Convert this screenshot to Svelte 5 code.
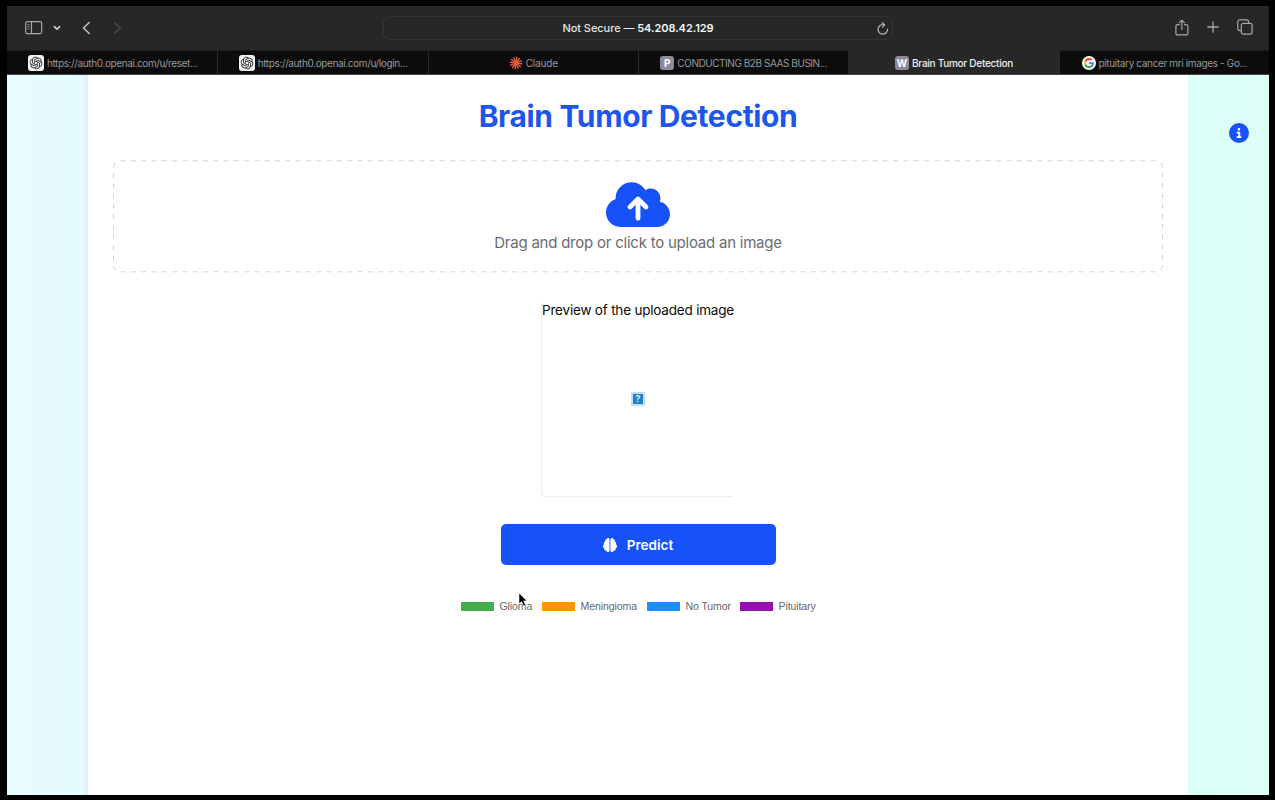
<script>
  const openai = 'M22.2819 9.8211a5.9847 5.9847 0 0 0-.5157-4.9108 6.0462 6.0462 0 0 0-6.5098-2.9A6.0651 6.0651 0 0 0 4.9807 4.1818a5.9847 5.9847 0 0 0-3.9977 2.9 6.0462 6.0462 0 0 0 .7427 7.0966 5.98 5.98 0 0 0 .511 4.9107 6.051 6.051 0 0 0 6.5146 2.9001A5.9847 5.9847 0 0 0 13.2599 24a6.0557 6.0557 0 0 0 5.7718-4.2058 5.9894 5.9894 0 0 0 3.9977-2.9001 6.0557 6.0557 0 0 0-.7475-7.0729zm-9.022 12.6081a4.4755 4.4755 0 0 1-2.8764-1.0408l.1419-.0804 4.7783-2.7582a.7948.7948 0 0 0 .3927-.6813v-6.7369l2.02 1.1686a.071.071 0 0 1 .038.052v5.5826a4.504 4.504 0 0 1-4.4945 4.4944zm-9.6607-4.1254a4.4708 4.4708 0 0 1-.5346-3.0137l.142.0852 4.783 2.7582a.7712.7712 0 0 0 .7806 0l5.8428-3.3685v2.3324a.0804.0804 0 0 1-.0332.0615L9.74 19.9502a4.4992 4.4992 0 0 1-6.1408-1.6464zM2.3408 7.8956a4.485 4.485 0 0 1 2.3655-1.9728V11.6a.7664.7664 0 0 0 .3879.6765l5.8144 3.3543-2.0201 1.1685a.0757.0757 0 0 1-.071 0l-4.8303-2.7865A4.504 4.504 0 0 1 2.3408 7.872zm16.5963 3.8558L13.1038 8.364 15.1192 7.2a.0757.0757 0 0 1 .071 0l4.8303 2.7913a4.4944 4.4944 0 0 1-.6765 8.1042v-5.6772a.79.79 0 0 0-.407-.667zm2.0107-3.0231l-.142-.0852-4.7735-2.7818a.7759.7759 0 0 0-.7854 0L9.409 9.2297V6.8974a.0662.0662 0 0 1 .0284-.0615l4.8303-2.7866a4.4992 4.4992 0 0 1 6.6802 4.66zM8.3065 12.863l-2.02-1.1638a.0804.0804 0 0 1-.038-.0567V6.0742a4.4992 4.4992 0 0 1 7.3757-3.4537l-.142.0805L8.704 5.459a.7948.7948 0 0 0-.3927.6813zm1.0976-2.3654l2.602-1.4998 2.6069 1.4998v2.9994l-2.5974 1.4997-2.6067-1.4997Z';

  const tabs = [
    { icon: 'openai', label: 'https://auth0.openai.com/u/reset...', spacing: -0.38 },
    { icon: 'openai', label: 'https://auth0.openai.com/u/login...', spacing: -0.38 },
    { icon: 'claude', label: 'Claude', spacing: -0.15 },
    { icon: 'P', label: 'CONDUCTING B2B SAAS BUSIN...', spacing: -0.45 },
    { icon: 'W', label: 'Brain Tumor Detection', spacing: -0.27, active: true },
    { icon: 'google', label: 'pituitary cancer mri images - Go...', spacing: -0.36 }
  ];
  const rays = Array.from({ length: 12 }, (_, i) => i * 30 + 8);
  const legend = [
    { label: 'Glioma', color: '#43ad4b', width: 81 },
    { label: 'Meningioma', color: '#ff9500', width: 105 },
    { label: 'No Tumor', color: '#1a8fff', width: 93 },
    { label: 'Pituitary', color: '#9610ad', width: 77 }
  ];
</script>

<div class="screen">
  <div class="window">
    <header class="toolbar">
      <div class="left">
        <svg width="18" height="14" viewBox="0 0 18 14" fill="none" stroke="#a5a7a6" stroke-width="1.2"><rect x=".7" y=".7" width="16" height="12" rx="1.8" /><path d="M6.5 1v11.5" /><path d="M2.5 3.5h2M2.5 5.7h2M2.5 7.9h2" stroke-width=".8" /></svg>
        <svg class="chev" width="8" height="6" viewBox="0 0 8 6" fill="none" stroke="#d0d1d0" stroke-width="1.6" stroke-linecap="round" stroke-linejoin="round"><path d="M1.4 1.6 4 4.2l2.6-2.6" /></svg>
        <svg class="back" width="9" height="14" viewBox="0 0 9 14" fill="none" stroke="#c3c5c4" stroke-width="1.5" stroke-linecap="round" stroke-linejoin="round"><path d="M7.2 1.5 1.5 7l5.7 5.5" /></svg>
        <svg class="fwd" width="9" height="14" viewBox="0 0 9 14" fill="none" stroke="#4c4e4d" stroke-width="1.4" stroke-linecap="round" stroke-linejoin="round"><path d="M1.8 2 7.3 7l-5.5 5" /></svg>
      </div>
      <div class="address">
        <span class="url">Not Secure — <b>54.208.42.129</b></span>
        <svg width="12" height="13" viewBox="0 0 12 13" fill="none" stroke="#b5b7b6" stroke-width="1.2" stroke-linecap="round" stroke-linejoin="round"><path d="M7.2 2.7A4.8 4.8 0 1 0 10.7 7.2M5.2.8l2.4 2-2.2 2.3" /></svg>
      </div>
      <div class="right">
        <svg width="14" height="17" viewBox="0 0 14 17" fill="none" stroke="#a5a7a6" stroke-width="1.2" stroke-linecap="round" stroke-linejoin="round"><path d="M4.3 5.7H2.4A1.5 1.5 0 0 0 .9 7.2v7.2a1.5 1.5 0 0 0 1.5 1.5h9a1.5 1.5 0 0 0 1.5-1.5V7.2a1.5 1.5 0 0 0-1.5-1.5H9.5M6.9 10.5V1.2M4.3 3.6l2.6-2.5 2.6 2.5" /></svg>
        <svg width="12" height="12" viewBox="0 0 12 12" fill="none" stroke="#a5a7a6" stroke-width="1.3" stroke-linecap="round"><path d="M6 .8v10.4M.8 6h10.4" /></svg>
        <svg width="16" height="16" viewBox="0 0 16 16" fill="none" stroke="#a5a7a6" stroke-width="1.2" stroke-linejoin="round"><rect x="4.3" y="4.3" width="10.8" height="10.8" rx="2" /><path d="M4.3 11.6H2.8a2 2 0 0 1-2-2V2.8a2 2 0 0 1 2-2h6.8a2 2 0 0 1 2 2v1.5" /></svg>
      </div>
    </header>

    <nav class="tabs">
      {#each tabs as tab}
        <div class="tab" class:active={tab.active}>
          {#if tab.icon === 'openai'}
            <svg width="16" height="16" viewBox="0 0 16 16"><rect width="16" height="16" rx="3" fill="#f2f2f2" /><path d={openai} transform="translate(1.7 1.7) scale(.525)" fill="#222" /></svg>
          {:else if tab.icon === 'claude'}
            <svg width="14" height="14" viewBox="-7 -7 14 14" stroke="#dd5b3b" stroke-width="1.5" stroke-linecap="round">{#each rays as r}<path d="M0 0V-5.7" transform="rotate({r})" />{/each}</svg>
          {:else if tab.icon === 'google'}
            <svg width="14" height="14" viewBox="0 0 14 14"><circle cx="7" cy="7" r="7" fill="#fff" /><g transform="translate(1.9 1.9) scale(.2125)"><path fill="#EA4335" d="M24 9.5c3.54 0 6.71 1.22 9.21 3.6l6.85-6.85C35.9 2.38 30.47 0 24 0 14.62 0 6.51 5.38 2.56 13.22l7.98 6.19C12.43 13.72 17.74 9.5 24 9.5z" /><path fill="#4285F4" d="M46.98 24.55c0-1.57-.15-3.09-.38-4.55H24v9.02h12.94c-.58 2.96-2.26 5.48-4.78 7.18l7.73 6c4.51-4.18 7.09-10.36 7.09-17.65z" /><path fill="#FBBC05" d="M10.53 28.59c-.48-1.45-.76-2.99-.76-4.59s.27-3.14.76-4.59l-7.98-6.19C.92 16.46 0 20.12 0 24c0 3.88.92 7.54 2.56 10.78l7.97-6.19z" /><path fill="#34A853" d="M24 48c6.48 0 11.93-2.13 15.89-5.81l-7.73-6c-2.15 1.45-4.92 2.3-8.16 2.3-6.26 0-11.57-4.22-13.47-9.91l-7.98 6.19C6.51 42.62 14.62 48 24 48z" /></g></svg>
          {:else}
            <span class="letter">{tab.icon}</span>
          {/if}
          <span style="letter-spacing: {tab.spacing}px">{tab.label}</span>
        </div>
      {/each}
    </nav>

    <div class="page">
      <main>
        <h1>Brain Tumor Detection</h1>
        <section class="drop">
          <svg class="dash" width="1051" height="113"><rect x=".5" y=".8" width="1049" height="111" rx="7" fill="none" stroke="#d3d4d6" stroke-width="1" stroke-dasharray="5.1 5.2" /></svg>
          <svg class="cloud" width="64" height="51.2" viewBox="0 0 640 512" fill="#1652f8"><path d="M144 480C64.5 480 0 415.5 0 336c0-62.8 40.2-116.2 96.2-135.9c-.1-2.7-.2-5.4-.2-8.1c0-88.4 71.6-160 160-160c59.3 0 111 32.2 138.7 80.2C409.9 102 428.3 96 448 96c53 0 96 43 96 96c0 12.2-2.3 23.8-6.4 34.6C596 238.4 640 290.1 640 352c0 70.7-57.3 128-128 128H144zm79-217c-9.4 9.4-9.4 24.6 0 33.9s24.6 9.4 33.9 0l39-39V392c0 13.3 10.7 24 24 24s24-10.7 24-24V257.9l39 39c9.4 9.4 24.6 9.4 33.9 0s9.4-24.6 0-33.9l-80-80c-9.4-9.4-24.6-9.4-33.9 0l-80 80z" /></svg>
          <p>Drag and drop or click to upload an image</p>
        </section>
        <figure>
          <figcaption>Preview of the uploaded image</figcaption>
          <div class="missing"><span>?</span></div>
        </figure>
        <button>
          <svg width="14" height="14" viewBox="0 0 512 512" fill="#fff"><path d="M184 0c30.9 0 56 25.1 56 56V456c0 30.9-25.1 56-56 56c-28.9 0-52.7-21.9-55.7-50.1c-5.2 1.4-10.7 2.1-16.3 2.1c-35.3 0-64-28.7-64-64c0-7.4 1.3-14.6 3.6-21.2C21.4 367.4 0 338.2 0 304c0-31.9 18.7-59.5 45.8-72.3C37.1 220.8 32 207 32 192c0-30.7 21.6-56.3 50.4-62.6C80.8 123.9 80 118 80 112c0-29.9 20.6-55.1 48.3-62.1C131.3 21.9 155.1 0 184 0zM328 0c28.9 0 52.6 21.9 55.7 49.9c27.8 7 48.3 32.1 48.3 62.1c0 6-.8 11.9-2.4 17.4c28.8 6.2 50.4 31.9 50.4 62.6c0 15-5.1 28.8-13.8 39.7C493.3 244.5 512 272.1 512 304c0 34.2-21.4 63.4-51.6 74.8c2.3 6.6 3.6 13.8 3.6 21.2c0 35.3-28.7 64-64 64c-5.6 0-11.1-.7-16.3-2.1c-3 28.2-26.8 50.1-55.7 50.1c-30.9 0-56-25.1-56-56V56c0-30.9 25.1-56 56-56z" /></svg>
          <span>Predict</span>
        </button>
        <div class="legend">
          {#each legend as item}
            <div class="item" style="width: {item.width}px"><i style="background: {item.color}"></i><span>{item.label}</span></div>
          {/each}
        </div>
      </main>
      <aside>
        <svg width="20" height="20" viewBox="0 0 512 512"><circle cx="256" cy="256" r="240" fill="#fff" /><path fill="#1652f8" d="M256 512A256 256 0 1 0 256 0a256 256 0 1 0 0 512zM216 336h24V272H216c-13.3 0-24-10.7-24-24s10.7-24 24-24h48c13.3 0 24 10.7 24 24v88h8c13.3 0 24 10.7 24 24s-10.7 24-24 24H216c-13.3 0-24-10.7-24-24s10.7-24 24-24zm40-208a32 32 0 1 1 0 64 32 32 0 1 1 0-64z" /></svg>
      </aside>
    </div>
  </div>
  <svg class="cursor" width="10" height="16" viewBox="0 0 10 16"><path d="M1 1v11l2.6-2.4 2 4.5 2-.9-2-4.3H9z" fill="#000" stroke="#fff" stroke-width=".6" /></svg>
</div>

<style>
  :global(body) { margin: 0; background: #000; }
  .screen { position: relative; box-sizing: border-box; width: 1275px; height: 800px; padding: 6px 6px 5px 7px; background: #000; font-family: Inter, "Liberation Sans", sans-serif; overflow: hidden; }
  .window { display: flex; flex-direction: column; width: 1262px; height: 789px; }
  svg { display: block; flex: none; }
  .toolbar { display: grid; grid-template-columns: 376px 510px 1fr; align-items: center; height: 44px; background: #262827; }
  .left { display: flex; align-items: center; padding: 0 0 1px 17.5px; }
  .chev { margin-left: 10px; }
  .back { margin-left: 21px; }
  .fwd { margin-left: 22px; }
  .address { display: grid; grid-template-columns: 1fr 12px; align-items: center; box-sizing: border-box; height: 24px; padding-right: 3px; border: 1px solid #343635; border-radius: 7px; color: #e4e4e4; }
  .url { padding-left: 15px; text-align: center; font-size: 11px; font-weight: 500; line-height: 22px; letter-spacing: -0.06px; white-space: nowrap; }
  .url b { font-weight: 600; color: #f4f4f4; }
  .right { display: flex; align-items: center; justify-content: flex-end; gap: 18px; padding: 0 16px 2px 0; }
  .tabs { display: grid; grid-template-columns: repeat(6, 1fr); height: 25px; box-sizing: border-box; border-bottom: 1px solid #454545; background: #0c0c0d; }
  .tab { display: flex; align-items: center; justify-content: center; gap: 3px; box-sizing: border-box; border-left: 1px solid #2b2b2b; border-top: 1px solid #1a1a1a; font-size: 10px; color: #98989a; white-space: nowrap; }
  .tab:first-child { border-left-color: #0c0c0d; }
  .tab.active { background: #272728; border-color: #272728; color: #efefef; font-weight: 500; }
  .letter { width: 14px; height: 14px; border-radius: 3px; background: #8d8a99; color: #fff; font-size: 10px; font-weight: 700; line-height: 14px; text-align: center; }
  .page { display: grid; grid-template-columns: 81px 1100px 81px; flex: 1; background: linear-gradient(90deg, #eafbff 0, #e3fbff 76px, #dff2ff 78px, #dff0ff 82px, #dafff6 1181px, #defff8 1262px); }
  main { grid-column: 2; display: flex; flex-direction: column; align-items: center; background: #fff; }
  h1 { margin: 22px 0 0; height: 38px; line-height: 38px; font-size: 30px; font-weight: 700; letter-spacing: -0.37px; color: #1d56ec; white-space: nowrap; }
  .drop { position: relative; display: flex; flex-direction: column; align-items: center; width: 1051px; height: 113px; margin-top: 25px; box-sizing: border-box; padding-top: 19px; }
  .dash { position: absolute; inset: 0; }
  .drop p { margin: 0; padding-top: 3px; font-size: 15px; line-height: 20px; letter-spacing: -0.23px; color: #6b6c72; white-space: nowrap; }
  figure { display: flex; flex-direction: column; align-items: center; box-sizing: border-box; width: 194px; height: 197px; margin: 26px 0 0; border-radius: 4px; box-shadow: inset 1px -1px 0 #ededee; }
  .drop + figure { margin-top: 27px; }
  figcaption { height: 20px; line-height: 20px; font-size: 13.5px; letter-spacing: -0.2px; color: #0a0a0a; white-space: nowrap; }
  .missing { display: grid; place-items: center; box-sizing: border-box; width: 14px; height: 14px; margin-top: 72px; border: 2px solid #c4dcf1; background: #2382c5; color: #e8f6ff; font-size: 9px; font-weight: 600; line-height: 10px; }
  button { display: flex; align-items: center; justify-content: center; gap: 10px; box-sizing: border-box; width: 275px; height: 41px; margin: 27px 0 0; padding: 0; border: 0; border-radius: 5px; background: #1652f8; color: #fff; font: 600 13.5px Inter, sans-serif; }
  .legend { display: flex; width: 356px; margin: 35px 0 0 2px; height: 13px; }
  .item { display: flex; align-items: center; gap: 6px; font: 10.5px/13px "Liberation Sans", sans-serif; letter-spacing: -0.08px; color: #666; white-space: nowrap; }
  .item i { width: 32.5px; height: 9px; flex: none; }
  aside { display: flex; justify-content: flex-start; padding: 48px 0 0 40.5px; }
  .cursor { position: absolute; left: 518px; top: 592px; }
</style>
